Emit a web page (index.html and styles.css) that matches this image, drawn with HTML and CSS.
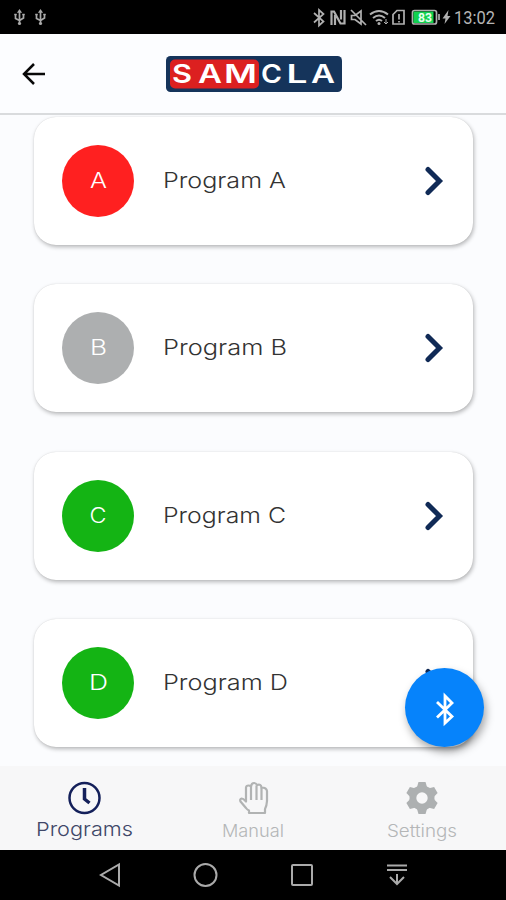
FILE: index.html
```html
<!DOCTYPE html>
<html lang="en">
<head>
<meta charset="utf-8">
<title>Samcla</title>
<link rel="stylesheet" href="styles.css">
</head>
<body>
<div class="screen">
  <div class="status">
    <svg class="usb" width="30" height="18" viewBox="0 0 30 18"><g id="usb" fill="none" stroke="#aaa" stroke-width="1.700"><path d="M5.500 2v12M1.500 5v4.500l4 2M9.500 5v4l-4 2.500"/><circle cx="5.500" cy="14.500" r="1.600" fill="#aaa" stroke="none"/><path d="M4.500 3l1-1.500 1 1.500zM.3 5.500h2.400M8.300 5.500h2.400" fill="#aaa"/></g><use href="#usb" x="21"/></svg>
    <svg class="tray" width="184" height="24" viewBox="313 6 184 24" fill="none" stroke="#b0b0b0" stroke-width="1.700">
      <path d="M314 13l9.500 8.500-4.500 4V10l4.500 4-9.500 8.500"/>
      <path d="M331.500 25V11.500h2.500l6.500 12h4V10M335 25V15M341 19.500V10" stroke-width="2.200"/>
      <path d="M351.500 15.500h3.500l6-4.500v13l-6-4.500h-3.500zM351 10l15 15"/>
      <path d="M370 14.500q9-7 18 0M373 18q6-5 12 0M376 21q3-2.500 6 0" stroke-width="2"/><circle cx="379" cy="23.500" r="1.500" fill="#b0b0b0" stroke="none"/><path d="M386 19v5M384 22l2 2 2-2" stroke-width="1"/>
      <path d="M397 10.500h7v13.500h-11V14.500zM399 14v5.500M399 21v1.500"/>
      <rect x="412.500" y="10.500" width="24" height="13.500" rx="2"/><rect x="413.500" y="11.500" width="20" height="11.500" fill="#12d14f" stroke="none"/><path d="M439 14v6"/>
      <path d="M448.500 10l-6 8.500h3l-1 5.500 6-8h-3z" fill="#b0b0b0" stroke="none"/>
      <text class="battery" x="418" y="21.500" textLength="14" lengthAdjust="spacingAndGlyphs">83</text>
      <text class="time" x="454" y="24" textLength="41" lengthAdjust="spacingAndGlyphs">13:02</text>
    </svg>
  </div>
  <header class="header">
    <svg class="back" width="24" height="22" viewBox="0 0 24 22"><path d="M23 11H2M12 1L2 11l10 10" fill="none" stroke="#080808" stroke-width="2.500"/></svg>
    <svg class="logo" width="176" height="37" viewBox="0 0 176 37">
      <rect width="176" height="36" rx="4.500" fill="#15345b"/><rect x="4" y="3.500" width="89" height="29" rx="5" fill="#dc2020"/>
      <g class="brand"><text x="6" y="27" textLength="20" lengthAdjust="spacingAndGlyphs">S</text><text x="32" y="27" textLength="24" lengthAdjust="spacingAndGlyphs">A</text><text x="58" y="27" textLength="33" lengthAdjust="spacingAndGlyphs">M</text><text x="95" y="27" textLength="21" lengthAdjust="spacingAndGlyphs">C</text><text x="120.500" y="27" textLength="21" lengthAdjust="spacingAndGlyphs">L</text><text x="145" y="27" textLength="24" lengthAdjust="spacingAndGlyphs">A</text></g>
    </svg>
  </header>
  <main class="list">
    <section class="card"><svg class="dot" width="72" height="72"><circle cx="36" cy="36" r="36" fill="#ff2020"/><text x="28" y="43" textLength="17" lengthAdjust="spacingAndGlyphs">A</text></svg><svg class="label" width="130" height="36"><text x="0" y="25" textLength="123" lengthAdjust="spacingAndGlyphs">Program A</text></svg><svg class="chevron" width="20" height="30"><path d="M4 3.500L15.500 15 4 26.500"/></svg></section>
    <section class="card"><svg class="dot" width="72" height="72"><circle cx="36" cy="36" r="36" fill="#adafb0"/><text x="28" y="43" textLength="17" lengthAdjust="spacingAndGlyphs">B</text></svg><svg class="label" width="130" height="36"><text x="0" y="25" textLength="124" lengthAdjust="spacingAndGlyphs">Program B</text></svg><svg class="chevron" width="20" height="30"><path d="M4 3.500L15.500 15 4 26.500"/></svg></section>
    <section class="card"><svg class="dot" width="72" height="72"><circle cx="36" cy="36" r="36" fill="#14b414"/><text x="27.500" y="43" textLength="17" lengthAdjust="spacingAndGlyphs">C</text></svg><svg class="label" width="130" height="36"><text x="0" y="25" textLength="123" lengthAdjust="spacingAndGlyphs">Program C</text></svg><svg class="chevron" width="20" height="30"><path d="M4 3.500L15.500 15 4 26.500"/></svg></section>
    <section class="card"><svg class="dot" width="72" height="72"><circle cx="36" cy="36" r="36" fill="#14b414"/><text x="27" y="43" textLength="19" lengthAdjust="spacingAndGlyphs">D</text></svg><svg class="label" width="130" height="36"><text x="0" y="25" textLength="125" lengthAdjust="spacingAndGlyphs">Program D</text></svg><svg class="chevron" width="20" height="30"><path d="M4 3.500L15.500 15 4 26.500"/></svg></section>
  </main>
  <button class="fab" aria-label="Bluetooth"><svg width="20" height="36" viewBox="0 0 20 36"><path d="M2 10l15 14.500-7 6.500V4l7 7L2 25.500" fill="none" stroke="#fff" stroke-width="2.800"/></svg></button>
  <nav class="tabs">
    <a class="tab active"><svg width="34" height="34" viewBox="0 0 34 34" fill="none" stroke="#14205a"><circle cx="17.500" cy="17" r="15" stroke-width="2.500"/><path d="M17.500 7v11l5 4" stroke-width="3.500"/></svg><svg class="caption" width="100" height="24"><text x="2" y="18" textLength="97" lengthAdjust="spacingAndGlyphs">Programs</text></svg></a>
    <a class="tab"><svg width="34" height="34" viewBox="0 0 34 34" fill="none" stroke="#b1b3b3" stroke-width="2.200" stroke-linejoin="round"><path d="M13 32v-2.500q-2-1-3-2.500L4.500 20.500q-1-2.500 1-3 1.500 0 3 1.500l1.500 1.500V6.500q.2-2 2.500-2 1.500 0 2.500 1 .5-3.500 3-3.500 2 0 3 2 4-1.500 4.500 2.500Q30.500 6.500 31 10v10q-.3 5-2 8v4z"/><path d="M15 5.500V19M20.500 4.500V19M25.500 6.500V19"/></svg><svg class="caption" width="100" height="24"><text x="19" y="19" textLength="62" lengthAdjust="spacingAndGlyphs">Manual</text></svg></a>
    <a class="tab"><svg width="34" height="34" viewBox="0 0 34 34"><g fill="#adb0b1"><circle cx="17" cy="17" r="12.500"/><path id="cog" d="M12 6l1.500-5h7L22 6v22l-1.500 5h-7L12 28z"/><use href="#cog" transform="rotate(60 17 17)"/><use href="#cog" transform="rotate(120 17 17)"/></g><circle cx="17" cy="17" r="5.700" fill="#f7f7f8"/></svg><svg class="caption" width="100" height="24"><text x="15" y="19" textLength="70" lengthAdjust="spacingAndGlyphs">Settings</text></svg></a>
  </nav>
  <div class="system">
    <svg width="22" height="26" viewBox="0 0 22 26"><path d="M20 2.500v21L2 13z"/></svg>
    <svg width="26" height="26" viewBox="0 0 26 26"><circle cx="12.500" cy="13" r="11"/></svg>
    <svg width="24" height="26" viewBox="0 0 24 26"><rect x="1" y="3" width="20" height="20" rx="1"/></svg>
    <svg width="20" height="26" viewBox="0 0 20 26"><path d="M0 3.500h20M0 8h20M10 12v10M3 15l7 7 7-7"/></svg>
  </div>
</div>
</body>
</html>
```
FILE: styles.css
```css
body { margin: 0; font-family: Inter, "Liberation Sans", sans-serif; }
.screen { position: relative; width: 506px; height: 900px; display: flex; flex-direction: column; overflow: hidden; background: #fbfcfe; }
svg { display: block; flex: none; }
.status { height: 34px; flex: none; box-sizing: border-box; background: #000; display: flex; justify-content: space-between; padding: 6px 9px 0 14px; }
.usb { margin-top: 3px; overflow: visible; }
.tray { overflow: visible; }
.battery { font: 700 12px Roboto, sans-serif; fill: #e8ffee; stroke: none; }
.time { font: 400 18px Roboto, sans-serif; fill: #b5b5b5; stroke: none; }
.header { height: 79px; flex: none; display: flex; align-items: flex-start; background: #fcfdff; border-bottom: 2px solid #d9dbdd; box-sizing: content-box; }
.back { margin: 28.500px 0 0 22px; }
.logo { margin: 21.500px 0 0 120px; }
.brand { font: 600 25px Inter, sans-serif; fill: #fff; }
.list { flex: 1; min-height: 0; overflow: hidden; padding: 1.500px 33px 0 34px; display: flex; flex-direction: column; gap: 39.500px; }
.card { height: 128px; flex: none; display: flex; align-items: center; padding: 0 29px 0 28px; box-sizing: border-box; border-radius: 22px; background: #fff; box-shadow: 1px 2px 4px rgba(0, 0, 0, .28), 0 0 1px rgba(0, 0, 0, .15); }
.dot text { font-size: 21px; font-weight: 300; fill: #fff; }
.label { margin-left: 28.500px; }
.label text { font-size: 21.500px; font-weight: 300; fill: #333; }
.chevron { margin-left: auto; fill: none; stroke: #102a56; stroke-width: 5; stroke-linecap: round; }
.fab { position: absolute; left: 405px; top: 668px; width: 79px; height: 79px; padding: 0; border: 0; border-radius: 50%; background: #0683fb; display: flex; align-items: center; justify-content: center; box-shadow: 2px 5px 8px rgba(0, 0, 0, .35); }
.fab svg { margin-top: 4px; }
.tabs { height: 84px; flex: none; display: grid; grid-template-columns: repeat(3, 1fr); background: #f7f7f8; }
.tab { display: flex; flex-direction: column; align-items: center; padding-top: 15px; }
.caption { margin-top: 3px; }
.caption text { font-size: 17px; font-weight: 300; fill: #b4b6b7; }
.active .caption text { font-size: 19px; fill: #404768; }
.system { height: 50px; flex: none; box-sizing: border-box; background: #000; display: flex; justify-content: space-between; padding: 12px 99px 0; }
.system svg { fill: none; stroke: #aaa; stroke-width: 2; }
```
